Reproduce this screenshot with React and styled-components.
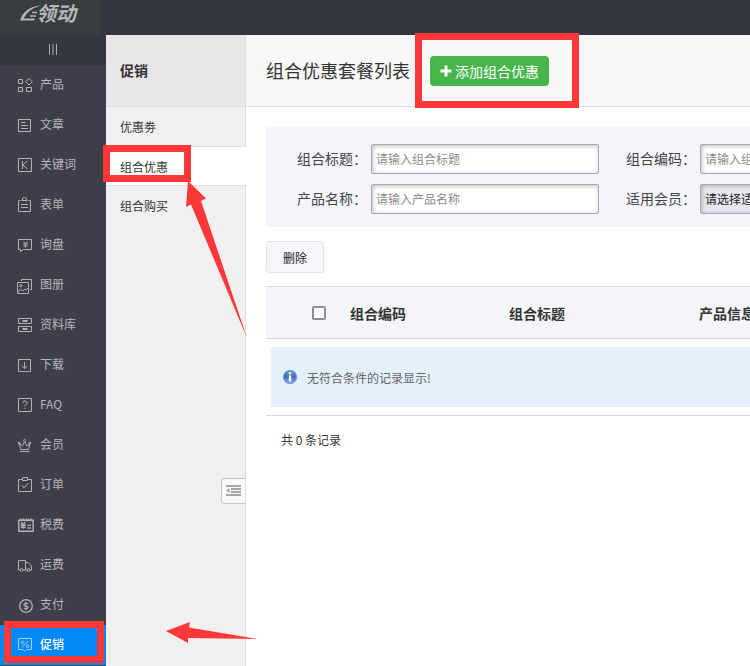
import styled, { createGlobalStyle } from "styled-components";
import { useState } from "react";

const GlobalStyle = createGlobalStyle`
    * {
        box-sizing: border-box;
    }
    body {
        margin: 0;
        background-color: #fff;
        color: #333;
        font-family: "Noto Sans CJK SC", "Liberation Sans", sans-serif;
        font-size: 12px;
    }
    button, input, select {
        font-family: inherit;
        font-size: 12px;
    }
    a {
        color: inherit;
        text-decoration: none;
    }
`

const Page = styled.div`
    position: relative;
    min-height: 100vh;
    display: flex;
    flex-direction: column;
    overflow: hidden;
`

const TopBar = styled.header`
    height: 35px;
    background-color: #353740;
    display: flex;
`

const Logo = styled.a`
    width: 100px;
    height: 35px;
    padding: 0 0 10px 20px;
    background-color: #393d3f;
    color: #b3b7b8;
    display: flex;
    align-items: center;
    font-size: 20px;
    line-height: 24px;
    font-weight: 700;
    font-style: italic;
`

const Body = styled.div`
    flex: 1;
    display: flex;
`

const Sidebar = styled.nav`
    flex: none;
    width: 106px;
    background-color: #3e3f4b;
`

const SidebarToggle = styled.button`
    width: 100%;
    height: 30px;
    padding: 0;
    border: 0;
    background-color: #353740;
    color: #9fb0ab;
    display: flex;
    align-items: center;
    justify-content: center;
    cursor: pointer;
`

const NavItem = styled.a`
    height: 40px;
    padding-left: 17px;
    display: flex;
    align-items: center;
    gap: 7px;
    color: ${props => props.$active ? '#fff' : '#b5b6ba'};
    background-color: ${props => props.$active ? '#0289f7' : 'transparent'};
    font-weight: ${props => props.$active ? 500 : 400};
    svg {
        flex: none;
        color: ${props => props.$active ? '#9fd2fc' : '#b0b1b6'};
    }
    span {
        padding-bottom: 3px;
    }
`

const SubPanel = styled.aside`
    position: relative;
    flex: none;
    width: 140px;
    background-color: #f0f0f0;
    border-right: solid 1px #dcdde3;
`

const SubTitle = styled.h2`
    height: 72px;
    margin: 0;
    padding: 0 0 2px 14px;
    display: flex;
    align-items: center;
    background-color: #e8e6e7;
    border-bottom: solid 1px #dcdde3;
    font-size: 14px;
    font-weight: 700;
`

const SubItem = styled.a`
    height: 40px;
    padding-left: 14px;
    display: flex;
    align-items: center;
    border-bottom: solid 1px ${props => props.$last ? 'transparent' : '#dcdde3'};
    ${props => props.$active && `
        height: 39px;
        margin-right: -1px;
        background-color: #fff;
    `}
`

const CollapseButton = styled.button`
    position: absolute;
    top: 443px;
    right: 0;
    width: 24px;
    height: 26px;
    padding: 0 0 0 4px;
    display: flex;
    align-items: center;
    border: solid 1px #c6c6c6;
    border-right: 0;
    border-radius: 4px 0 0 4px;
    background-color: #f9f9f9;
    color: #a6a6a6;
    cursor: pointer;
`

const Main = styled.main`
    flex: 1;
    min-width: 0;
    overflow: hidden;
`

const PageHeader = styled.div`
    height: 72px;
    padding-left: 20px;
    display: flex;
    align-items: center;
    gap: 20px;
    background-color: #f8f8f8;
    border-bottom: solid 1px #dcdde3;
    h1 {
        margin: 0;
        padding-bottom: 2px;
        font-size: 18px;
        font-weight: 400;
        white-space: nowrap;
    }
`

const AddButton = styled.button`
    height: 30px;
    padding: 0 10px;
    display: flex;
    align-items: center;
    gap: 3px;
    border: 0;
    border-radius: 4px;
    background-color: #46b54a;
    color: #fff;
    font-size: 14px;
    white-space: nowrap;
    cursor: pointer;
`

const Content = styled.div`
    padding: 20px 0 0 20px;
`

const FilterForm = styled.form`
    padding: 17px 0 13px 31px;
    display: grid;
    grid-template-columns: 302px 302px;
    gap: 10px 27px;
    background-color: #f4f5fa;
`

const Field = styled.div`
    display: flex;
    align-items: center;
    label {
        flex: none;
        width: 74px;
        padding-bottom: 2px;
        font-size: 14px;
        color: #444;
    }
    input, select {
        flex: 1;
        min-width: 0;
        height: 30px;
        padding: 0 4px 2px;
        border: solid 1px #a8a7b9;
        border-radius: 2px;
        box-shadow: inset 1px 1px 4px rgba(0, 0, 0, .25);
        color: #222;
    }
    input {
        background-color: #fff;
    }
    select {
        appearance: none;
        background-color: #e8e7ed;
    }
    input::placeholder {
        color: #8c8c8c;
    }
`

const DeleteButton = styled.button`
    width: 58px;
    height: 32px;
    margin: 14px 0 13px;
    padding: 0;
    display: block;
    border: solid 1px #dfe2ec;
    border-radius: 3px;
    background-color: #f4f6fa;
    color: #222;
    cursor: pointer;
`

const Table = styled.table`
    width: 100%;
    min-width: 640px;
    table-layout: fixed;
    border-collapse: separate;
    border-spacing: 0;
    border-top: solid 1px #d9dadb;
    th {
        height: 52px;
        padding: 0 5px;
        text-align: left;
        font-size: 14px;
        font-weight: 700;
        background-color: #f4f5f9;
        border-bottom: solid 1px #d9dadb;
    }
    td {
        padding: 8px 5px;
        border-bottom: solid 1px #d9dadb;
    }
`

const CheckAll = styled.input`
    appearance: none;
    display: block;
    width: 14px;
    height: 14px;
    margin: 0 0 0 41px;
    border: solid 2px #8e8d9c;
    border-radius: 2px;
    background-color: #fff;
    &:checked {
        background-color: #0289f7;
    }
`

const Notice = styled.div`
    height: 60px;
    padding-left: 10px;
    display: flex;
    align-items: center;
    gap: 8px;
    border: solid 1px #e8eef3;
    background-color: #e4f0fc;
    color: #666;
`

const Total = styled.div`
    padding: 14px 15px;
    line-height: 20px;
`

const Mark = styled.div`
    position: absolute;
    left: ${props => props.$x}px;
    top: ${props => props.$y}px;
    width: ${props => props.$w}px;
    height: ${props => props.$h}px;
    border: solid 7px #fc3838;
    pointer-events: none;
`

const Arrow = styled.svg`
    position: absolute;
    left: ${props => props.$x}px;
    top: ${props => props.$y}px;
    pointer-events: none;
`

const yuan = <path d="M6.5 5.5L8.5 8L10.5 5.5M8.5 8V12M6 8.5H11M6 10.5H11"/>

const icons = {
    product: <><path d="M1.5 2.5h4v4h-4zM1.5 10.5h4v4h-4zM9.5 10.5h5v4h-5z"/><path d="M12 1.3L15.3 4.7L12 8L8.7 4.7z"/></>,
    article: <path d="M1.5 2.5h12v12h-12zM4 5.5H8.5M4 8.5H11M4 11.5H11"/>,
    keyword: <path d="M1.5 1.5h13v13h-13zM5.5 4V12M10 4L6 8L10.5 12"/>,
    form: <path d="M3.5 3.5H1.5V14.5H13.5V3.5H11.5M4.5 3.5H10.5M5.5 3V2Q5.5 .5 7.5 .5T9.5 2V3M4 7.5H11M4 10.5H11"/>,
    inquiry: <><path d="M1.5 2.5H14.5V12.5H6.5L3.5 14.5V12.5H1.5z"/><path d="M6.5 4.5L8.5 6.5L10.5 4.5M8.5 6.5V10.5M6 7H11M6.5 9H10.5"/></>,
    album: <><path d="M4.5 4V2.5H14.5V12.5H13M.5 5.5H11.5V16.5H.5z"/><circle cx="3.8" cy="8.7" r="1.2"/><path d="M1 15L3.5 12L5.5 14L8 12L9 13L11 11"/></>,
    library: <><path d="M1.5 1.5h13v5h-13zM1.5 9.5h13v5h-13z"/><path d="M5.5 4H10.5M5.5 12H10.5" strokeWidth="2"/></>,
    download: <path d="M1.5 2.5h12v12h-12zM7.5 5V11.5M4.5 8.7L7.5 11.7L10.5 8.7"/>,
    faq: <><path d="M1.5 1.5h13v13h-13z"/><path d="M6 5.8Q6 4 8 4T10 5.8Q10 6.8 9 7.4T8 9.5M8 10.8V12"/></>,
    member: <><path d="M2.5 6.5L3.5 12.5H11.5L13 6.5L10 9L7.5 4.5L5.5 9z"/><circle cx="2.2" cy="6" r="1"/><circle cx="7.5" cy="3.5" r="1"/><circle cx="12.8" cy="6" r="1"/><path d="M3 14.5H12.5"/></>,
    order: <><path d="M5 2.5H1.5V14.5H14.5V2.5H11M5.5 .5h5v3h-5z"/><path d="M4.5 8L7 10.8L11.5 6"/></>,
    tax: <><path d="M1.8 3V14.3H16.2V3" strokeWidth="1.4"/><path d="M1.5 2.5q1.3 2 2.5 0q1.3 2 2.5 0q1.3 2 2.5 0q1.3 2 2.5 0q1.3 2 2.5 0q1.3 2 2.5 0" strokeWidth="1.6"/><g transform="translate(-2.3 -.3)" strokeWidth="1.4">{yuan}</g><path d="M10.5 8.3H14M10.5 11H14" strokeWidth="1.3"/></>,
    shipping: <><path d="M3 13H1.5V3.5H8.5V12.5M8.5 5.5H11L14.5 9V13H13M6 13H10"/><circle cx="4.5" cy="13" r="1.4"/><circle cx="11.5" cy="13" r="1.4"/></>,
    payment: <><circle cx="9" cy="9" r="6.3" strokeWidth="1.3"/><path d="M11 7.2Q10.7 6 9 6T7 7.4T9 9T11 10.6T9 12T7 10.8M9 4.8V13.2" strokeWidth="1.1"/></>,
    promotion: <><path d="M1.5 1.5H14.5V12.5H10L8 14.5L6 12.5H1.5z"/><path d="M11 4L5 10.5"/><circle cx="5.5" cy="5.5" r="1.3"/><circle cx="10.7" cy="9.2" r="1.3"/></>
}

const navItems = [
    { icon: 'product', label: '产品' },
    { icon: 'article', label: '文章' },
    { icon: 'keyword', label: '关键词' },
    { icon: 'form', label: '表单' },
    { icon: 'inquiry', label: '询盘' },
    { icon: 'album', label: '图册' },
    { icon: 'library', label: '资料库' },
    { icon: 'download', label: '下载' },
    { icon: 'faq', label: 'FAQ' },
    { icon: 'member', label: '会员' },
    { icon: 'order', label: '订单' },
    { icon: 'tax', label: '税费' },
    { icon: 'shipping', label: '运费' },
    { icon: 'payment', label: '支付' },
    { icon: 'promotion', label: '促销' }
]

const subItems = ['优惠劵', '组合优惠', '组合购买'];

function NavIcon({ name }) {
    return (
        <svg width="16" height="16" viewBox="0 0 16 16" fill="none" stroke="currentColor" overflow="visible">
            { icons[name] }
        </svg>
    )
}

function InfoIcon() {
    return (
        <svg width="17" height="16" viewBox="0 0 17 16">
            <defs>
                <linearGradient id="info" x1="0" y1="0" x2="0" y2="1">
                    <stop offset="0" stopColor="#6d98d3"/>
                    <stop offset=".5" stopColor="#3f70b8"/>
                    <stop offset="1" stopColor="#86b2e6"/>
                </linearGradient>
            </defs>
            <circle cx="8" cy="8" r="6.7" fill="url(#info)" stroke="#6d93c6" strokeWidth=".8"/>
            <circle cx="8" cy="4.3" r="1.3" fill="#fff"/>
            <path d="M6.8 6.4H9.2V12.4H6.8z" fill="#fff"/>
        </svg>
    )
}

function App() {
    const [active, setActive] = useState('促销');
    const [activeSub, setActiveSub] = useState('组合优惠');
    const [allChecked, setAllChecked] = useState(false);

    return (
        <Page lang="zh-CN">
            <GlobalStyle/>
            <TopBar>
                <Logo href="#">
                    <svg width="16" height="18" viewBox="0 0 16 18" overflow="visible" aria-hidden="true">
                        <path d="M21 1.5Q4 3 0 16.5H14L15 14.5H3.5Q8 5 21 1.5z" fill="currentColor"/>
                        <path d="M12 8.5H17M10 12H16" stroke="currentColor" strokeWidth="1.6"/>
                    </svg>
                    领动
                </Logo>
            </TopBar>
            <Body>
                <Sidebar>
                    <SidebarToggle type="button" aria-label="菜单">
                        <svg width="8" height="12" viewBox="0 0 8 12" stroke="currentColor">
                            <path d="M.5 0V11M4 0V11M7.5 0V11"/>
                        </svg>
                    </SidebarToggle>
                    { navItems.map(item => (
                        <NavItem href="#" key={item.icon} $active={active === item.label} onClick={() => setActive(item.label)}>
                            <NavIcon name={item.icon}/>
                            <span>{item.label}</span>
                        </NavItem>
                    ))}
                </Sidebar>
                <SubPanel>
                    <SubTitle>促销</SubTitle>
                    { subItems.map((item, index) => (
                        <SubItem href="#" key={item}
                                 $active={activeSub === item}
                                 $last={index === subItems.length - 1}
                                 onClick={() => setActiveSub(item)}
                        >
                            {item}
                        </SubItem>
                    ))}
                    <CollapseButton type="button" aria-label="收起">
                        <svg width="15" height="12" viewBox="0 0 15 12" fill="currentColor">
                            <path d="M0 0H15V2H0zM5 3H15V5H5zM5 6H15V8H5zM0 9H15V11H0zM3.5 3V8L0 5.5z"/>
                        </svg>
                    </CollapseButton>
                </SubPanel>
                <Main>
                    <PageHeader>
                        <h1>组合优惠套餐列表</h1>
                        <AddButton type="button">
                            <svg width="12" height="12" viewBox="0 0 12 12" fill="currentColor">
                                <path d="M4.5 .5h3v4h4v3h-4v4h-3v-4h-4v-3h4z"/>
                            </svg>
                            添加组合优惠
                        </AddButton>
                    </PageHeader>
                    <Content>
                        <FilterForm>
                            <Field>
                                <label htmlFor="title">组合标题：</label>
                                <input id="title" type="text" placeholder="请输入组合标题"/>
                            </Field>
                            <Field>
                                <label htmlFor="code">组合编码：</label>
                                <input id="code" type="text" placeholder="请输入组合编码"/>
                            </Field>
                            <Field>
                                <label htmlFor="name">产品名称：</label>
                                <input id="name" type="text" placeholder="请输入产品名称"/>
                            </Field>
                            <Field>
                                <label htmlFor="member">适用会员：</label>
                                <select id="member">
                                    <option>请选择适用会员</option>
                                </select>
                            </Field>
                        </FilterForm>
                        <DeleteButton type="button">删除</DeleteButton>
                        <Table>
                            <colgroup>
                                <col width="79"/>
                                <col width="159"/>
                                <col width="190"/>
                                <col/>
                            </colgroup>
                            <thead>
                                <tr>
                                    <th>
                                        <CheckAll type="checkbox" aria-label="全选" checked={allChecked}
                                                  onChange={() => setAllChecked(!allChecked)}
                                        />
                                    </th>
                                    <th>组合编码</th>
                                    <th>组合标题</th>
                                    <th>产品信息</th>
                                </tr>
                            </thead>
                            <tbody>
                                <tr>
                                    <td colSpan="4">
                                        <Notice>
                                            <InfoIcon/>
                                            无符合条件的记录显示!
                                        </Notice>
                                    </td>
                                </tr>
                            </tbody>
                        </Table>
                        <Total>共 0 条记录</Total>
                    </Content>
                </Main>
            </Body>
            <Mark $x={415} $y={33} $w={164} $h={75}/>
            <Mark $x={103} $y={145} $w={88} $h={37}/>
            <Mark $x={4} $y={621} $w={100} $h={42}/>
            <Arrow $x={186} $y={181} width="62" height="158" fill="#fc3838">
                <path d="M2 0L20 17.5L15 20L61 157L5 23.5L0 26z"/>
            </Arrow>
            <Arrow $x={166} $y={622} width="92" height="22" fill="#fc3838">
                <path d="M0 9L24 0L23 5.5L91 17L22 16V21z"/>
            </Arrow>
        </Page>
    )
}

export default App;
